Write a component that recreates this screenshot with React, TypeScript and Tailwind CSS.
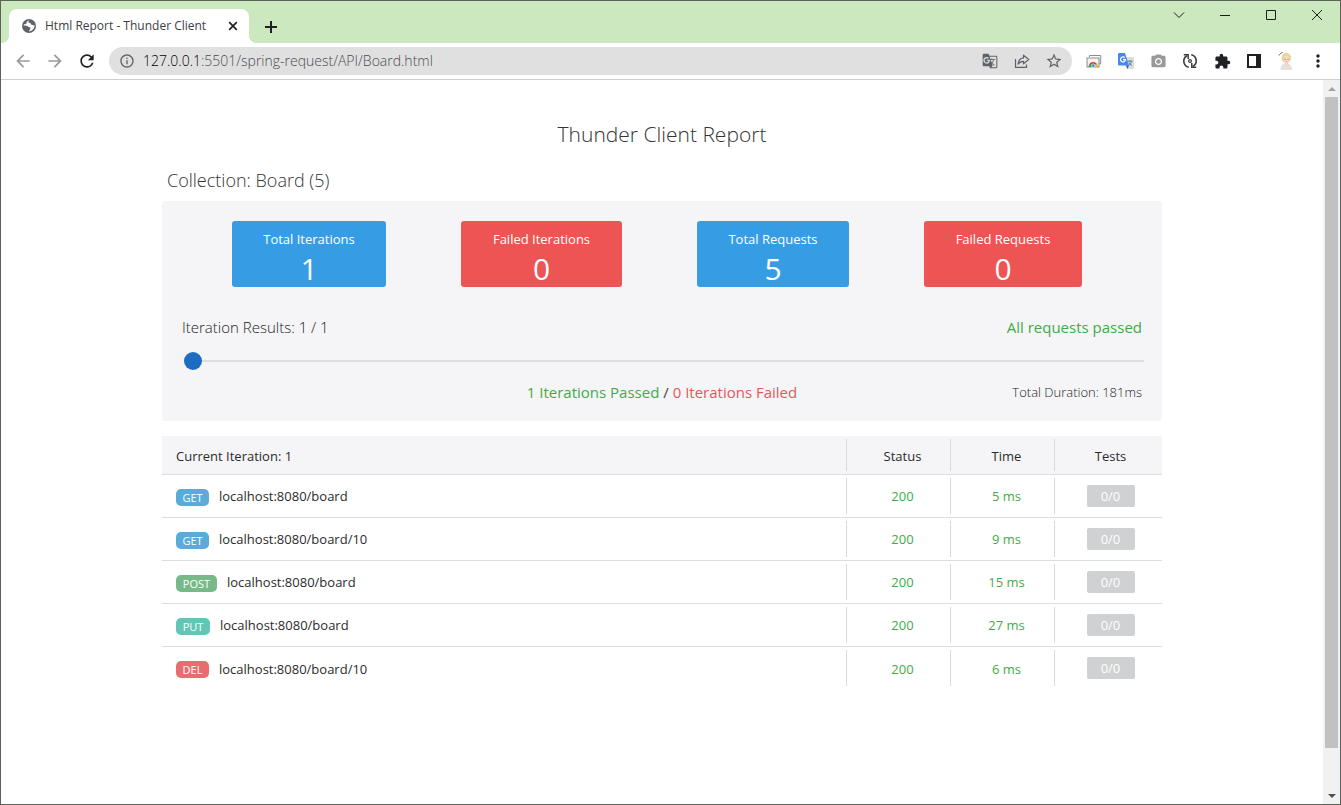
import { useState } from "react";
import type { ReactNode } from "react";
import clsx from "clsx";
import {
  MdArrowBack,
  MdArrowForward,
  MdExtension,
  MdGTranslate,
  MdInfoOutline,
  MdMoreVert,
  MdPhotoCamera,
  MdRefresh,
  MdStarBorder,
} from "react-icons/md";

type Method = "GET" | "POST" | "PUT" | "DEL";

type RequestRow = {
  method: Method;
  url: string;
  status: number;
  time: string;
  tests: string;
};

const summary = [
  { label: "Total Iterations", value: 1, className: "w-[154px] bg-[#369de4]" },
  { label: "Failed Iterations", value: 0, className: "w-[161px] bg-[#ed5454]" },
  { label: "Total Requests", value: 5, className: "w-[152px] bg-[#369de4]" },
  { label: "Failed Requests", value: 0, className: "w-[158px] bg-[#ed5454]" },
];

const requests: RequestRow[] = [
  { method: "GET", url: "localhost:8080/board", status: 200, time: "5 ms", tests: "0/0" },
  { method: "GET", url: "localhost:8080/board/10", status: 200, time: "9 ms", tests: "0/0" },
  { method: "POST", url: "localhost:8080/board", status: 200, time: "15 ms", tests: "0/0" },
  { method: "PUT", url: "localhost:8080/board", status: 200, time: "27 ms", tests: "0/0" },
  { method: "DEL", url: "localhost:8080/board/10", status: 200, time: "6 ms", tests: "0/0" },
];

const methodColors: Record<Method, string> = {
  GET: "w-[33px] bg-[#58acda]",
  POST: "w-[41px] bg-[#78b989]",
  PUT: "w-[34px] bg-[#63c6b5]",
  DEL: "w-[33px] bg-[#e96d70]",
};

function IconButton({
  label,
  className,
  children,
}: {
  label: string;
  className?: string;
  children: ReactNode;
}) {
  return (
    <button
      type="button"
      aria-label={label}
      className={clsx("flex size-4 shrink-0 items-center justify-center", className)}
    >
      {children}
    </button>
  );
}

function TabStrip() {
  return (
    <div className="flex h-[42px] shrink-0 items-end bg-[#cce8be] pl-2">
      <div className="relative flex h-[34px] w-60 items-center rounded-t-lg bg-white pr-2 pl-3">
        <span className="absolute bottom-0 -left-2 size-2 bg-[radial-gradient(circle_at_0_0,transparent_8px,white_8px)]" />
        <span className="absolute -right-2 bottom-0 size-2 bg-[radial-gradient(circle_at_100%_0,transparent_8px,white_8px)]" />
        <svg viewBox="0 0 16 16" className="size-4">
          <circle cx="8" cy="8" r="7" fill="#5f6368" />
          <path
            d="M9 2.600c-1.300.4-2 1.200-1.500 2 .8.700 2.200.1 2.400 1.200.1 1.200 1.300 1.500 3.600 1.400.2 2.200-.8 4.200-2.800 5.300L8 13.400c-.3-1.200 1.500-1.500 1.500-2.900-.1-1.300-1.600-1-2.400-1.900C6.200 7.700 4.600 7.800 2.600 7.600c.1-.6.300-1.200.6-1.700 1 .6 2.100.4 2.300-.6.2-1.200.5-2 1.700-2.600z"
            fill="#fff"
          />
        </svg>
        <span className="ml-2 flex-1 text-xs whitespace-nowrap text-[#3c4043]">
          Html Report - Thunder Client
        </span>
        <IconButton label="Close tab">
          <svg viewBox="0 0 16 16" className="size-4" stroke="#202124" strokeWidth="1.700">
            <path d="M4.200 4.200l7.600 7.600M11.800 4.200l-7.600 7.600" />
          </svg>
        </IconButton>
      </div>
      <IconButton label="New tab" className="mb-2 ml-3.5">
        <svg viewBox="0 0 16 16" className="size-4" stroke="#202124" strokeWidth="2">
          <path d="M8 2v12M2 8h12" />
        </svg>
      </IconButton>
      <div className="ml-auto flex gap-[30px] self-start pt-1.5 pr-[15px]">
        <IconButton label="Search tabs">
          <svg viewBox="0 0 16 16" className="size-4" fill="none" stroke="#1b1f1a">
            <path d="M3 5.500l5 5 5-5" />
          </svg>
        </IconButton>
        <IconButton label="Minimize">
          <svg viewBox="0 0 16 16" className="size-4" stroke="#1b1f1a">
            <path d="M3 8.500h10" />
          </svg>
        </IconButton>
        <IconButton label="Maximize">
          <svg viewBox="0 0 16 16" className="size-4" fill="none" stroke="#1b1f1a">
            <path d="M3.500 3.500h9v9h-9z" />
          </svg>
        </IconButton>
        <IconButton label="Close window">
          <svg viewBox="0 0 16 16" className="size-4" stroke="#1b1f1a">
            <path d="M3 3l10 10M13 3L3 13" />
          </svg>
        </IconButton>
      </div>
    </div>
  );
}

function Toolbar() {
  return (
    <div className="flex h-[37px] shrink-0 items-center border-b border-[#cfcfcf] bg-white px-3.5">
      <div className="flex gap-4 text-[#9a9a9a]">
        <IconButton label="Back">
          <MdArrowBack className="size-5 shrink-0" />
        </IconButton>
        <IconButton label="Forward">
          <MdArrowForward className="size-5 shrink-0" />
        </IconButton>
        <IconButton label="Reload" className="text-[#202124]">
          <MdRefresh className="size-5 shrink-0" />
        </IconButton>
      </div>

      <div className="ml-3.5 flex h-7 flex-1 items-center gap-4 rounded-full bg-[#e0e0e0] px-2.5 text-[#5f6368]">
        <div className="flex flex-1 items-center gap-2">
          <MdInfoOutline className="size-4" />
          <span className="text-sm font-light text-[#4a4d50]">
            <span className="text-black">127.0.0.1</span>
            :5501/spring-request/API/Board.html
          </span>
        </div>
        <IconButton label="Translate this page">
          <MdGTranslate className="size-4" />
        </IconButton>
        <IconButton label="Share">
          <svg viewBox="0 0 16 16" className="size-4" fill="none" stroke="currentColor" strokeWidth="1.200">
            <path d="M1.500 6v8.400h11V11.500" />
            <path
              d="M9.500 2.200l5.300 4.300-5.300 4.300V8.300C7 8.300 5.200 9.300 4 11.300c.3-3.700 2.300-6 5.500-6.400z"
              strokeLinejoin="round"
            />
          </svg>
        </IconButton>
        <IconButton label="Bookmark this tab">
          <MdStarBorder className="size-[18px] shrink-0" />
        </IconButton>
      </div>

      <div className="ml-3.5 flex gap-4 text-[#202124]">
        <IconButton label="Web Store">
          <svg viewBox="0 0 16 16" className="size-4">
            <path d="M3.500 4V2.500h11.200v8.300H13" fill="none" stroke="#8b8b8b" />
            <rect x="1" y="5" width="12" height="9" fill="#f3f3f3" stroke="#8b8b8b" />
            <path d="M2.500 14a4.600 4.600 0 019.200 0z" fill="#34a853" />
            <path d="M3 11.600a4.600 4.600 0 018.300 0H7.200z" fill="#e2382b" />
            <path d="M7.200 11.600h4.100a4.600 4.600 0 01.4 2.400H7.200z" fill="#fbbc05" />
            <circle cx="7.200" cy="12.700" r="1.800" fill="#4285f4" stroke="#fff" strokeWidth=".6" />
          </svg>
        </IconButton>
        <IconButton label="Google Translate">
          <svg viewBox="0 0 16 16" className="size-4">
            <path d="M6 4h9a1 1 0 011 1v10a1 1 0 01-1 1H9.500z" fill="#dcdcdc" />
            <path
              d="M9.500 8.200h5M12 7.200v1M13.600 8.200c-.4 2-1.600 3.300-3 4.200M11 9.600c.6 1.300 1.700 2.300 3 2.900"
              fill="none"
              stroke="#5b7f93"
            />
            <path d="M1 0h6l4 12.500H1a1 1 0 01-1-1V1a1 1 0 011-1z" fill="#4688f1" />
            <path d="M7.700 12.500H11L9.500 16z" fill="#2f5fc4" />
            <path d="M6.800 4.700A2.500 2.500 0 107.500 6.600H5" fill="none" stroke="#fff" strokeWidth="1.200" />
          </svg>
        </IconButton>
        <IconButton label="Screen capture" className="text-[#999]">
          <MdPhotoCamera className="size-[17px] shrink-0" />
        </IconButton>
        <IconButton label="Sync">
          <svg viewBox="0 0 16 16" className="size-4" fill="none" stroke="#3c3c3c" strokeWidth="1.600">
            <path d="M5 2.700A6.200 6.200 0 006.800 14.200M11 13.300A6.200 6.200 0 009.200 1.800" />
            <path d="M1.800 1.800h4.400V6M14.200 14.200H9.800V10" strokeWidth="1.500" />
            <circle cx="8" cy="8" r="1.400" strokeWidth="1.200" />
          </svg>
        </IconButton>
        <IconButton label="Extensions">
          <MdExtension className="size-[17px] shrink-0" />
        </IconButton>
        <IconButton label="Side panel">
          <svg viewBox="0 0 16 16" className="size-4">
            <path d="M1 1h14v14H1zM3 3v10h7V3z" fill="#202124" fillRule="evenodd" />
          </svg>
        </IconButton>
        <IconButton label="Profile">
          <svg viewBox="0 0 16 20" className="h-5 w-4 shrink-0">
            <path d="M1 4.500C2 2.800 3 2 4.500 1.500" fill="none" stroke="#55525c" />
            <path d="M2.500 19c0-4 1.500-6.500 5.500-6.500s6 2.500 6 6.500z" fill="#e6e2da" />
            <path d="M7 11h3v3.500H7z" fill="#f3d5c0" />
            <ellipse cx="8.300" cy="7" rx="4.800" ry="5" fill="#e6d98f" />
            <ellipse cx="8.500" cy="8.500" rx="2.800" ry="3.700" fill="#f9d9c8" />
            <path d="M6.500 8.300h1.200M9.500 8.300h1.200" stroke="#8d7a8c" />
            <path d="M7.900 10.600h1.300" stroke="#d9858b" strokeWidth=".7" />
          </svg>
        </IconButton>
        <IconButton label="Menu">
          <MdMoreVert className="size-5 shrink-0" />
        </IconButton>
      </div>
    </div>
  );
}

function Scrollbar() {
  return (
    <div className="flex w-[17px] shrink-0 flex-col bg-[#f1f1f1]">
      <div className="flex h-[17px] items-center justify-center">
        <svg viewBox="0 0 8 4" className="h-1 w-2" fill="#a3a3a3">
          <path d="M0 4l4-4 4 4z" />
        </svg>
      </div>
      <div className="flex-1 px-0.5">
        <div className="h-[94.3%] bg-[#c1c1c1]" />
      </div>
      <div className="flex h-[17px] items-center justify-center">
        <svg viewBox="0 0 8 4" className="h-1 w-2" fill="#505050">
          <path d="M0 0l4 4 4-4z" />
        </svg>
      </div>
    </div>
  );
}

function SummaryPanel() {
  const [iteration, setIteration] = useState(1);

  return (
    <section className="rounded-sm bg-[#f5f5f7] px-5 pt-5 pb-[17px]">
      <div className="flex justify-center gap-[75px] pr-2.5">
        {summary.map((item) => (
          <div
            key={item.label}
            className={clsx(
              "flex h-[66px] flex-col items-center rounded-[3px] pt-2 text-white",
              item.className,
            )}
          >
            <span className="text-[13px] leading-5">{item.label}</span>
            <span className="text-[30px] leading-10">{item.value}</span>
          </div>
        ))}
      </div>

      <div className="mt-7 flex items-center justify-between leading-6">
        <label htmlFor="iteration" className="text-[15px] font-light text-[#222]">
          Iteration Results: {iteration} / 1
        </label>
        <span className="text-[15px] text-[#3fab47]">All requests passed</span>
      </div>

      <div className="mt-[13px] -mr-0.5 ml-0.5 flex">
        <input
          id="iteration"
          type="range"
          min={1}
          max={1}
          value={iteration}
          onChange={(e) => setIteration(Number(e.target.value))}
          className="h-[18px] w-full appearance-none bg-transparent [&::-webkit-slider-runnable-track]:h-0.5 [&::-webkit-slider-runnable-track]:bg-[#dcdde0] [&::-webkit-slider-thumb]:-mt-2 [&::-webkit-slider-thumb]:size-[18px] [&::-webkit-slider-thumb]:appearance-none [&::-webkit-slider-thumb]:rounded-full [&::-webkit-slider-thumb]:bg-[#1c6dc1]"
        />
      </div>

      <div className="mt-2.5 grid grid-cols-[1fr_auto_1fr] items-center leading-6">
        <p className="col-start-2 text-[15px] text-[#444]">
          <span className="text-[#3fab47]">1 Iterations Passed</span> /{" "}
          <span className="text-[#e2585b]">0 Iterations Failed</span>
        </p>
        <p className="text-right text-[13px] leading-6 font-light text-[#222]">
          Total Duration: 181ms
        </p>
      </div>
    </section>
  );
}

function RequestTable() {
  return (
    <table className="mt-[15px] w-full table-fixed border-collapse text-[13px] text-[#2b2b2b]">
      <thead>
        <tr className="h-[38px] border-b border-[#dcdde0] bg-[#f5f5f7]">
          <th className="pt-[3px] pl-3.5 text-left font-normal">Current Iteration: 1</th>
          <th className="w-[104px] p-0 font-normal">
            <div className="flex h-8 items-center justify-center border-l border-[#d9dadc] pt-[3px] pl-2">
              Status
            </div>
          </th>
          <th className="w-[104px] p-0 font-normal">
            <div className="flex h-8 items-center justify-center border-l border-[#d9dadc] pt-[3px] pl-2">
              Time
            </div>
          </th>
          <th className="w-[108px] p-0 font-normal">
            <div className="flex h-8 items-center justify-center border-l border-[#d9dadc] pt-[3px] pl-1">
              Tests
            </div>
          </th>
        </tr>
      </thead>
      <tbody>
        {requests.map((row, index) => (
          <tr key={index} className="h-[43px] border-b border-[#dcdde0] last:border-b-0">
            <td className="pt-[3px] pl-3.5">
              <div className="flex items-center gap-2.5">
                <span
                  className={clsx(
                    "rounded-[5px] text-center text-[11px] leading-[17px] text-white",
                    methodColors[row.method],
                  )}
                >
                  {row.method}
                </span>
                <span>{row.url}</span>
              </div>
            </td>
            <td className="p-0 text-[#3fab47]">
              <div className="flex h-9 items-center justify-center border-l border-[#d9dadc] pt-[3px] pl-2">
                {row.status}
              </div>
            </td>
            <td className="p-0 text-[#3fab47]">
              <div className="flex h-9 items-center justify-center border-l border-[#d9dadc] pt-[3px] pl-2">
                {row.time}
              </div>
            </td>
            <td className="p-0">
              <div className="flex h-9 items-center justify-center border-l border-[#d9dadc] pl-1">
                <span className="w-12 rounded-xs bg-[#cfd1d2] text-center leading-[22px] text-white">
                  {row.tests}
                </span>
              </div>
            </td>
          </tr>
        ))}
      </tbody>
    </table>
  );
}

export default function App() {
  return (
    <div className="flex h-screen flex-col border border-[#5b6357] bg-white font-['Open_Sans','Noto_Sans',sans-serif]">
      <TabStrip />
      <Toolbar />
      <div className="flex min-h-0 flex-1">
        <main className="flex-1 overflow-hidden">
          <div className="mx-auto max-w-[1000px] pt-[38px]">
            <h1 className="text-center text-[21px] leading-8 font-light text-[#333]">
              Thunder Client Report
            </h1>
            <h2 className="mt-4 mb-[7px] pl-[5px] text-lg leading-7 font-light text-[#333]">
              Collection: Board (5)
            </h2>
            <SummaryPanel />
            <RequestTable />
          </div>
        </main>
        <Scrollbar />
      </div>
    </div>
  );
}
